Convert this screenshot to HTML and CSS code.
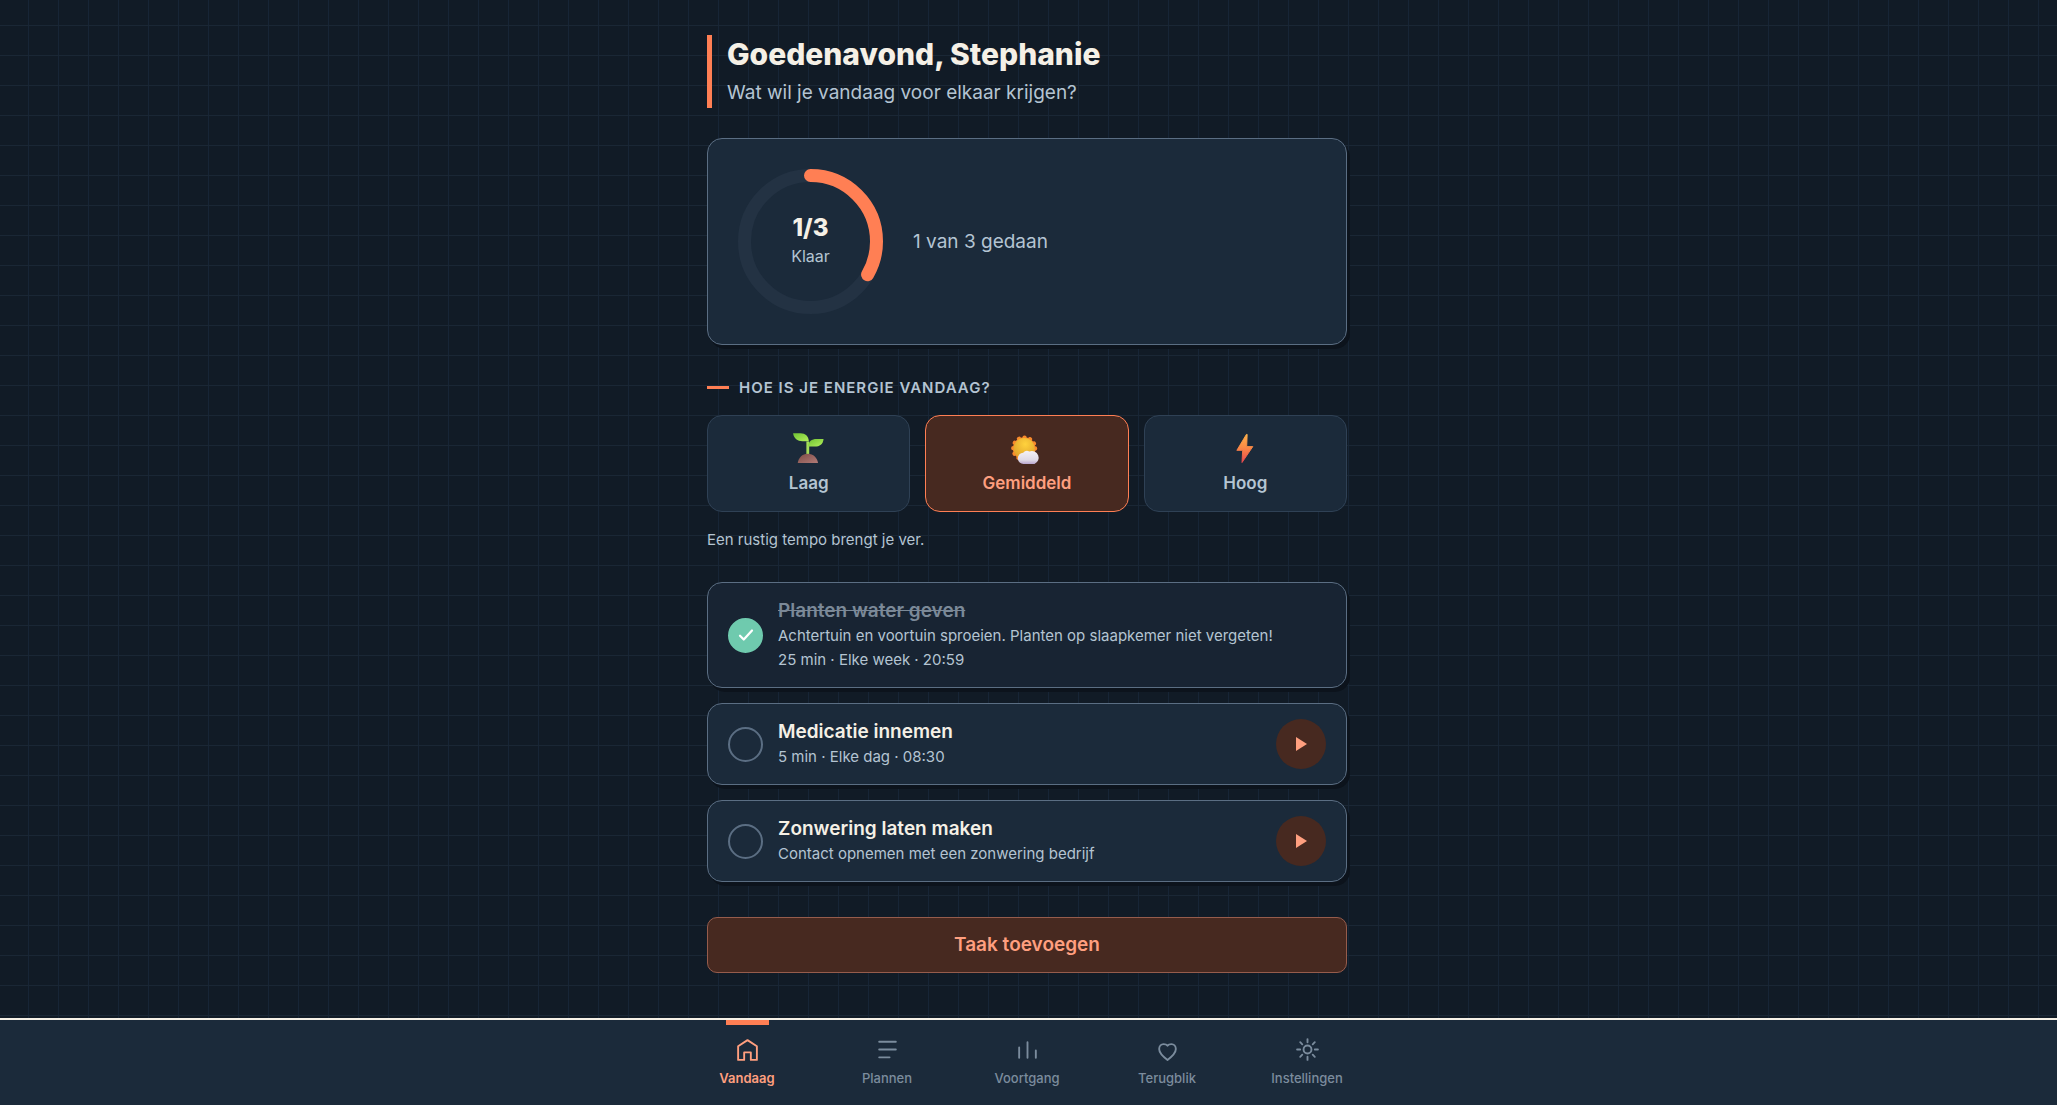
FILE: index.html
```
<!DOCTYPE html>
<html lang="nl">

<head>
    <meta charset="UTF-8">
    <meta name="viewport" content="width=device-width, initial-scale=1.0">
    <title>Vandaag</title>
    <link rel="stylesheet" href="styles.css">
</head>

<body>
    <main class="page">
        <header class="greeting">
            <h1>Goedenavond, Stephanie</h1>
            <p>Wat wil je vandaag voor elkaar krijgen?</p>
        </header>

        <section class="card progress">
            <div class="ring">
                <svg viewBox="0 0 145 145" fill="none" stroke-width="13">
                    <circle class="ring-track" cx="72.5" cy="72.5" r="66" />
                    <circle class="ring-value" cx="72.5" cy="72.5" r="66" stroke-linecap="round"
                        stroke-dasharray="138.2 414.7" transform="rotate(-90 72.5 72.5)" />
                </svg>
                <div class="ring-text">
                    <strong>1/3</strong>
                    <span>Klaar</span>
                </div>
            </div>
            <p>1 van 3 gedaan</p>
        </section>

        <section class="energy">
            <h2>Hoe is je energie vandaag?</h2>
            <div class="energy-options">
                <button type="button" class="energy-option">
                    <svg viewBox="0 0 32 32">
                        <defs>
                            <linearGradient id="leaf" x1="0" y1="0" x2="1" y2="1">
                                <stop offset="0" stop-color="#6fc233" />
                                <stop offset="1" stop-color="#b4f05c" />
                            </linearGradient>
                            <linearGradient id="soil" x1="0" y1="0" x2="1" y2="1">
                                <stop offset="0" stop-color="#7d4b45" />
                                <stop offset="1" stop-color="#b17b77" />
                            </linearGradient>
                        </defs>
                        <path fill="#a5dd5b" d="M13.2 9h3v15h-3z" />
                        <path fill="url(#leaf)" d="M-1 .3h8c5 0 8.500 3 8.800 8.500H9C3.500 8.800 0 6-1 .3z" />
                        <path fill="url(#leaf)" d="M31.500 6.300H24c-5 0-8.800 2.500-9 8.200h7c5.500 0 9-2.700 9.500-8.200z" />
                        <path fill="url(#soil)" d="M4 32c.6-5.500 4.700-10 10.700-10S25 26.500 25.600 32z" />
                    </svg>
                    Laag
                </button>
                <button type="button" class="energy-option active">
                    <svg viewBox="0 0 32 32">
                        <defs>
                            <radialGradient id="sun" cx=".55" cy=".3" r=".7">
                                <stop offset="0" stop-color="#ffd23d" />
                                <stop offset="1" stop-color="#dfa12a" />
                            </radialGradient>
                            <linearGradient id="cloud" x1="0" y1="0" x2="0" y2="1">
                                <stop offset="0" stop-color="#f4f1f6" />
                                <stop offset=".7" stop-color="#dfdae6" />
                                <stop offset="1" stop-color="#b9a6cf" />
                            </linearGradient>
                        </defs>
                        <circle cx="13" cy="16.500" r="12" fill="#f98a2c" />
                        <circle cx="13" cy="16.500" r="11.700" fill="none" stroke="#f98a2c" stroke-width="4.500"
                            stroke-linecap="round" stroke-dasharray="0.100 6.026" />
                        <circle cx="13" cy="16.500" r="11.300" fill="url(#sun)" />
                        <path fill="url(#cloud)"
                            d="M12.500 33a6 6 0 0 1-.6-12 5.600 5.600 0 0 1 6.600-1.300 7 7 0 1 1 5.500 13.300z" />
                    </svg>
                    Gemiddeld
                </button>
                <button type="button" class="energy-option">
                    <svg viewBox="0 0 32 32">
                        <defs>
                            <linearGradient id="bolt" x1="0" y1="0" x2="0" y2="1">
                                <stop offset="0" stop-color="#fcb04a" />
                                <stop offset=".45" stop-color="#fb8b45" />
                                <stop offset="1" stop-color="#e9484f" />
                            </linearGradient>
                        </defs>
                        <path fill="url(#bolt)" stroke="url(#bolt)" stroke-linejoin="round"
                            d="M17.500 1.500 7.300 18.500H13.500L12.800 31.500 24.300 14.500h-6.500L18.300 1.500z" />
                    </svg>
                    Hoog
                </button>
            </div>
            <p>Een rustig tempo brengt je ver.</p>
        </section>

        <ul class="tasks">
            <li class="card task done">
                <button type="button" class="check" aria-label="Planten water geven, gedaan">
                    <svg viewBox="0 0 24 24" fill="none" stroke="currentColor" stroke-width="3" stroke-linecap="round"
                        stroke-linejoin="round">
                        <path d="M4 13l5 5L20 6" />
                    </svg>
                </button>
                <div class="task-text">
                    <h3>Planten water geven</h3>
                    <p>Achtertuin en voortuin sproeien. Planten op slaapkemer niet vergeten!</p>
                    <p>25 min · Elke week · 20:59</p>
                </div>
            </li>
            <li class="card task">
                <button type="button" class="check" aria-label="Medicatie innemen afvinken"></button>
                <div class="task-text">
                    <h3>Medicatie innemen</h3>
                    <p>5 min · Elke dag · 08:30</p>
                </div>
                <button type="button" class="play" aria-label="Start Medicatie innemen">
                    <svg viewBox="0 0 12 14">
                        <path fill="currentColor" d="M1 0l11 7-11 7z" />
                    </svg>
                </button>
            </li>
            <li class="card task">
                <button type="button" class="check" aria-label="Zonwering laten maken afvinken"></button>
                <div class="task-text">
                    <h3>Zonwering laten maken</h3>
                    <p>Contact opnemen met een zonwering bedrijf</p>
                </div>
                <button type="button" class="play" aria-label="Start Zonwering laten maken">
                    <svg viewBox="0 0 12 14">
                        <path fill="currentColor" d="M1 0l11 7-11 7z" />
                    </svg>
                </button>
            </li>
        </ul>

        <button type="button" class="add-task">Taak toevoegen</button>
    </main>

    <nav class="tabbar">
        <div class="tabs">
            <a href="#vandaag" class="tab active">
                <svg viewBox="0 0 24 24">
                    <path d="M3 8.800 12 3l9 5.800V22h-5.800v-7.200H8.800V22H3z" />
                </svg>
                Vandaag
            </a>
            <a href="#plannen" class="tab">
                <svg viewBox="0 0 24 24">
                    <path d="M4 4.500h16M4 12h16M4 19.500h10" />
                </svg>
                Plannen
            </a>
            <a href="#voortgang" class="tab">
                <svg viewBox="0 0 24 24">
                    <path d="M4 20V10M12 20V5M20 20v-7" />
                </svg>
                Voortgang
            </a>
            <a href="#terugblik" class="tab">
                <svg viewBox="0 0 24 24">
                    <path d="M12 22C8 19 4 15.500 4 11.500 4 8.500 6 6.800 8.200 6.800c1.600 0 2.900.3 3.800 1.500.9-1.200 2.200-1.500 3.800-1.500C18 6.800 20 8.500 20 11.500c0 4-4 7.500-8 10.500z" />
                </svg>
                Terugblik
            </a>
            <a href="#instellingen" class="tab">
                <svg viewBox="0 0 24 24">
                    <circle cx="12" cy="12" r="3.800" />
                    <path d="M12 2v3M12 19v3M2 12h3M19 12h3M5 5l2 2M17 17l2 2M5 19l2-2M17 7l2-2" />
                </svg>
                Instellingen
            </a>
        </div>
    </nav>
</body>

</html>
```
FILE: styles.css
```
* {
    box-sizing: border-box;
}

body {
    margin: 0;
    min-height: 100vh;
    display: flex;
    flex-direction: column;
    font-family: Inter, "Liberation Sans", sans-serif;
    color: #b4c4d2;
    background-color: #111b26;
    background-image:
        linear-gradient(#1a2735 1px, transparent 1px),
        linear-gradient(90deg, #172536 1px, transparent 1px);
    background-size: 30px 30px;
    background-position: 28px 25px;
}

h1,
h2,
h3,
p {
    margin: 0;
}

button {
    font-family: inherit;
    cursor: pointer;
}

.page {
    flex: 1;
    width: 100%;
    max-width: 671px;
    margin: 0 auto;
    padding: 35px 17px 45px 14px;
}

.greeting {
    border-left: 5px solid #ff7f54;
    padding-left: 15px;
    margin-bottom: 30px;
}

.greeting h1 {
    font-size: 30px;
    line-height: 38px;
    font-weight: 800;
    color: #f5f0e6;
}

.greeting p {
    padding-top: 5px;
    font-size: 19px;
    line-height: 30px;
}

.card {
    background-color: #1b2a3a;
    border: 1px solid #5b6e83;
    border-radius: 15px;
    box-shadow: 3px 4px 0 #0c131c;
}

.progress {
    display: flex;
    align-items: center;
    gap: 30px;
    padding: 30px;
}

.progress p {
    font-size: 19px;
}

.ring {
    display: grid;
    width: 145px;
    height: 145px;
}

.ring svg,
.ring-text {
    grid-area: 1 / 1;
}

.ring-track {
    stroke: #233243;
}

.ring-value {
    stroke: #ff7f54;
}

.ring-text {
    display: flex;
    flex-direction: column;
    align-items: center;
    justify-content: center;
    padding-bottom: 3px;
    font-size: 16px;
    line-height: 25px;
}

.ring-text strong {
    font-size: 24px;
    line-height: 32px;
    font-weight: 800;
    color: #f5f0e6;
}

.energy h2 {
    display: flex;
    align-items: center;
    gap: 10px;
    margin: 30px 0 15px;
    font-size: 15px;
    line-height: 25px;
    font-weight: 600;
    letter-spacing: 1px;
    text-transform: uppercase;
}

.energy h2::before {
    content: "";
    width: 22px;
    height: 3px;
    background-color: #ff7f54;
}

.energy-options {
    display: grid;
    grid-template-columns: repeat(3, 1fr);
    gap: 15px;
}

.energy-option {
    display: flex;
    flex-direction: column;
    align-items: center;
    gap: 8px;
    padding: 17px 10px 15px;
    font-size: 17px;
    line-height: 25px;
    font-weight: 600;
    color: #b4c4d2;
    background-color: #1b2a3a;
    border: 1px solid #2f4155;
    border-radius: 15px;
}

.energy-option svg {
    width: 30px;
    height: 30px;
    overflow: visible;
}

.energy-option.active {
    color: #ff9f7f;
    background-color: #472920;
    border-color: #ff7f54;
}

.energy p {
    margin-top: 15px;
    font-size: 15px;
    line-height: 25px;
}

.tasks {
    display: flex;
    flex-direction: column;
    gap: 15px;
    margin: 30px 0 35px;
    padding: 0;
    list-style: none;
}

.task {
    display: flex;
    align-items: center;
    gap: 15px;
    padding: 15px 20px;
}

.task-text {
    flex: 1;
}

.task h3 {
    font-size: 19px;
    line-height: 26px;
    font-weight: 600;
    color: #f5f0e6;
}

.task p {
    font-size: 15px;
    line-height: 24px;
}

.task.done {
    background-color: #182433;
}

.task.done h3 {
    color: #7b8998;
    text-decoration: line-through;
}

.check {
    display: flex;
    align-items: center;
    justify-content: center;
    width: 35px;
    height: 35px;
    padding: 0;
    color: #fff;
    background: none;
    border: 2px solid #5b6e83;
    border-radius: 50%;
}

.check svg {
    width: 18px;
    height: 18px;
}

.done .check {
    background-color: #6fcaae;
    border-color: #6fcaae;
}

.play {
    display: flex;
    align-items: center;
    justify-content: center;
    width: 50px;
    height: 50px;
    padding: 0;
    color: #ff9f7f;
    background-color: #472920;
    border: none;
    border-radius: 50%;
}

.play svg {
    width: 12px;
    height: 14px;
}

.add-task {
    display: block;
    width: 100%;
    padding: 12px;
    font-size: 19px;
    line-height: 30px;
    font-weight: 600;
    color: #ff9f7f;
    background-color: #472920;
    border: 1px solid #965c4c;
    border-radius: 10px;
}

.tabbar {
    position: sticky;
    bottom: 0;
    background-color: #1b2a3a;
    border-top: 2px solid #f5f0e6;
}

.tabs {
    display: flex;
    max-width: 703px;
    margin: 0 auto;
    padding-right: 3px;
}

.tab {
    flex: 1;
    display: flex;
    flex-direction: column;
    align-items: center;
    gap: 6px;
    padding-bottom: 17px;
    font-size: 13px;
    line-height: 20px;
    font-weight: 500;
    color: #7b8c9d;
    text-decoration: none;
}

.tab::before {
    content: "";
    width: 43px;
    height: 5px;
    margin-bottom: 6px;
}

.tab svg {
    width: 25px;
    height: 25px;
    fill: none;
    stroke: currentColor;
    stroke-width: 1.8;
    stroke-linecap: round;
    stroke-linejoin: round;
}

.tab.active {
    color: #ff9f7f;
    font-weight: 600;
}

.tab.active::before {
    background-color: #ff7f54;
}
```
